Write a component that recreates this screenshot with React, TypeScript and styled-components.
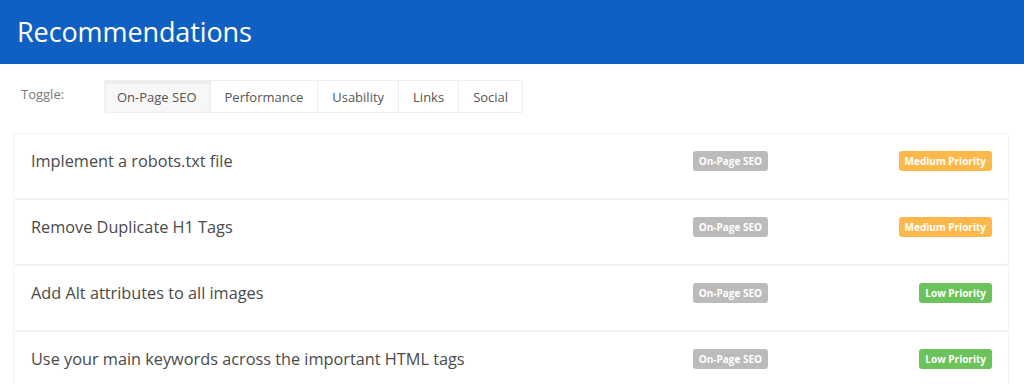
import { FunctionComponent } from 'react';
import styled, { createGlobalStyle } from 'styled-components';

type Priority = 'medium' | 'low';

type Item = {
  title: string;
  category: string;
  priority: Priority;
};

const tabs = ['On-Page SEO', 'Performance', 'Usability', 'Links', 'Social'];

const items: Item[] = [
  { title: 'Implement a robots.txt file', category: 'On-Page SEO', priority: 'medium' },
  { title: 'Remove Duplicate H1 Tags', category: 'On-Page SEO', priority: 'medium' },
  { title: 'Add Alt attributes to all images', category: 'On-Page SEO', priority: 'low' },
  {
    title: 'Use your main keywords across the important HTML tags',
    category: 'On-Page SEO',
    priority: 'low',
  },
];

const priorityLabel: Record<Priority, string> = {
  medium: 'Medium Priority',
  low: 'Low Priority',
};

const App: FunctionComponent = () => {
  return (
    <>
      <GlobalStyle />
      <Header>
        <Title>Recommendations</Title>
      </Header>
      <Toolbar>
        <ToggleLabel>Toggle:</ToggleLabel>
        <Tabs>
          {tabs.map((tab, index) => (
            <Tab key={tab} active={index === 0}>
              {tab}
            </Tab>
          ))}
        </Tabs>
      </Toolbar>
      <List>
        {items.map(item => (
          <Card key={item.title}>
            <CardTitle>{item.title}</CardTitle>
            <Badge tone='#bbbbbb'>{item.category}</Badge>
            <PriorityCell>
              <Badge tone={item.priority === 'medium' ? '#fdb84c' : '#6cc35c'}>
                {priorityLabel[item.priority]}
              </Badge>
            </PriorityCell>
          </Card>
        ))}
      </List>
    </>
  );
};

export default App;

const GlobalStyle = createGlobalStyle`
  body {
    margin: 0;
    background: #fff;
    font-family: 'Open Sans', 'Noto Sans', sans-serif;
  }
`;

const Header = styled.header`
  height: 64px;
  background: #105fc3;
  display: flex;
  align-items: center;
  padding: 0 17px;
  box-sizing: border-box;
`;

const Title = styled.h1`
  margin: 0 0 2px;
  color: #fff;
  font-size: 27px;
  font-weight: 400;
  letter-spacing: -0.1px;
`;

const Toolbar = styled.div`
  display: flex;
  align-items: flex-start;
  padding: 16px 0 0 21px;
  height: 69px;
  box-sizing: border-box;
`;

const ToggleLabel = styled.span`
  width: 83px;
  padding-top: 5px;
  font-size: 13px;
  color: #7a7a7a;
`;

const Tabs = styled.div`
  display: flex;
  border: 1px solid #eeeeee;
  border-radius: 2px;
`;

const Tab = styled.div<{ active?: boolean }>`
  height: 31px;
  display: flex;
  align-items: center;
  padding: 0 ${p => (p.active ? '13px' : '14px')} 0 ${p => (p.active ? '12px' : '14px')};
  font-size: 13px;
  color: #555;
  border-left: 1px solid #eeeeee;
  background: ${p => (p.active ? '#f7f7f7' : '#fff')};
  box-shadow: ${p => (p.active ? 'inset 0 2px 3px rgba(0,0,0,0.06)' : 'none')};

  &:first-child {
    border-left: none;
  }
`;

const List = styled.div`
  display: flex;
  flex-direction: column;
  margin: 0 15px 0 13px;
`;

const Card = styled.div`
  height: 66px;
  box-sizing: border-box;
  display: flex;
  align-items: center;
  padding: 0 16px 10px 17px;
  border: 1px solid #f3f3f3;
  border-radius: 2px;
`;

const CardTitle = styled.div`
  flex: 1;
  font-size: 16.3px;
  color: #4a4a4a;
`;

const PriorityCell = styled.div`
  width: 224px;
  display: flex;
  justify-content: flex-end;
`;

const Badge = styled.span<{ tone: string }>`
  height: 20px;
  display: inline-flex;
  align-items: center;
  padding: 0 6px;
  border-radius: 3px;
  background: ${p => p.tone};
  color: #fff;
  font-size: 10px;
  font-weight: 700;
`;
